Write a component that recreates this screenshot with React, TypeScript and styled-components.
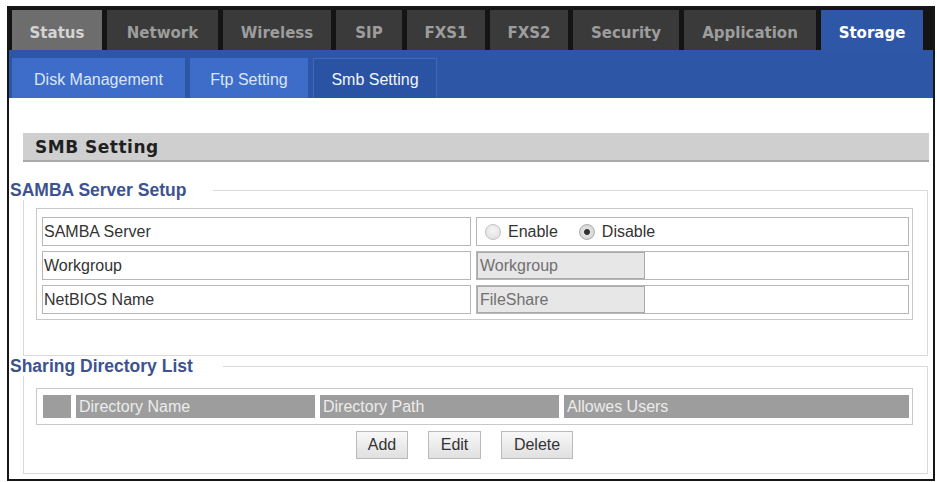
import React, { useState } from 'react';
import styled, { createGlobalStyle } from 'styled-components';

const GlobalStyle = createGlobalStyle`
    html, body {
        margin: 0;
        padding: 0;
        background: #ffffff;
    }
    #root {
        padding: 6px 0 0 7px;
    }
`;

const Frame = styled.div`
    box-sizing: border-box;
    width: 928px;
    height: 475px;
    border: 2px solid #161616;
    display: flex;
    flex-direction: column;
    background: #ffffff;
`;

const TabBar = styled.div`
    height: 42px;
    box-sizing: border-box;
    padding: 2px 0 0 3px;
    background: #141414;
    display: flex;
    gap: 5px;
`;

const Tab = styled.div<{ $w: number; $state: 'first' | 'normal' | 'active' }>`
    width: ${p => p.$w}px;
    height: 40px;
    box-sizing: border-box;
    padding-top: 6px;
    display: flex;
    align-items: center;
    justify-content: center;
    font-family: 'DejaVu Sans', Verdana, sans-serif;
    font-weight: bold;
    font-size: 15px;
    background: ${p => (p.$state === 'active' ? '#2f57a8' : p.$state === 'first' ? '#6d6d6d' : '#3a3a3a')};
    color: ${p => (p.$state === 'active' ? '#ffffff' : p.$state === 'first' ? '#d4d4d4' : '#9d9d9d')};
`;

const SubBar = styled.div`
    height: 48px;
    box-sizing: border-box;
    padding: 8px 0 0 3px;
    background: #2e56a7;
    display: flex;
    gap: 5px;
`;

const SubTab = styled.div<{ $w: number; $active?: boolean }>`
    width: ${p => p.$w}px;
    height: 40px;
    box-sizing: border-box;
    padding-top: 2px;
    display: flex;
    align-items: center;
    justify-content: center;
    font-family: 'Liberation Sans', Arial, sans-serif;
    font-size: 16px;
    background: ${p => (p.$active ? '#2b53a3' : '#3d6dc8')};
    border: 1px solid ${p => (p.$active ? '#4169b9' : '#3d6dc8')};
    border-bottom: none;
    color: ${p => (p.$active ? '#f2f5fb' : '#dbe5f7')};
`;

const Content = styled.div`
    flex: 1;
    padding-top: 35px;
    font-family: 'Liberation Sans', Arial, sans-serif;
    font-size: 16px;
    color: #333333;
`;

const PageHeader = styled.div`
    height: 29px;
    box-sizing: border-box;
    margin: 0 4px 0 14px;
    padding-left: 12px;
    display: flex;
    align-items: center;
    background: #cfcfcf;
    border-bottom: 2px solid #a9a9a9;
    font-family: 'DejaVu Sans', Verdana, sans-serif;
    font-weight: bold;
    font-size: 17px;
    letter-spacing: 0.5px;
    color: #1f1f1f;
`;

const LegendRow = styled.div<{ $top?: number; $rule: number }>`
    display: flex;
    height: 20px;
    margin: ${p => p.$top ?? 0}px 5px 0 1px;

    span {
        font-weight: bold;
        font-size: 17.5px;
        line-height: 20px;
        color: #3d5390;
        white-space: nowrap;
    }

    i {
        flex: 1;
        margin: 10px 0 0 ${p => p.$rule}px;
        border-top: 1px solid #d9d9d9;
        border-right: 1px solid #d9d9d9;
    }
`;

const FieldBox = styled.div<{ $pt: number; $pb: number }>`
    margin: 0 5px 0 14px;
    padding: ${p => p.$pt}px 14px ${p => p.$pb}px 12px;
    border: 1px solid #d9d9d9;
    border-top: none;
`;

const FormTable = styled.div`
    border: 1px solid #c9c9c9;
    padding: 8px 3px 5px 5px;
    display: grid;
    grid-template-columns: 429px 1fr;
    grid-auto-rows: 29px;
    gap: 5px;
`;

const Cell = styled.div`
    box-sizing: border-box;
    border: 1px solid #b7b7b7;
    display: flex;
    align-items: center;
    padding-left: 1px;
    color: #333333;
`;

const ValueCell = styled(Cell)`
    padding-left: 0;
`;

const RadioGroup = styled.label<{ $first?: boolean }>`
    display: flex;
    align-items: center;
    gap: 7px;
    margin-left: ${p => (p.$first ? 8 : 21)}px;
    color: #333333;
`;

const Radio = styled.input.attrs({ type: 'radio' })`
    appearance: none;
    margin: 0;
    width: 16px;
    height: 16px;
    border-radius: 50%;
    border: 1px solid #c2c2c2;
    background: radial-gradient(circle at 50% 40%, #f6f6f6 0%, #dcdcdc 100%);

    &:checked {
        background: radial-gradient(circle, #333333 0 2.5px, #e2e2e2 3.5px, #cdcdcd 100%);
        border-color: #adadad;
    }
`;

const TextInput = styled.input`
    box-sizing: border-box;
    width: 168px;
    height: 100%;
    margin: 0;
    padding: 0 0 0 2px;
    border: 1px solid #a9a9a9;
    background: #e7e7e7;
    font-family: 'Liberation Sans', Arial, sans-serif;
    font-size: 16px;
    color: #707070;
`;

const ListTable = styled.div`
    border: 1px solid #c9c9c9;
    padding: 6px 3px 6px 6px;
    display: grid;
    grid-template-columns: 28px 239px 239px 1fr;
    height: 23px;
    gap: 5px;
`;

const HeadCell = styled.div`
    background: #9d9d9d;
    color: #ececec;
    display: flex;
    align-items: center;
    padding-left: 3px;
    white-space: nowrap;
`;

const ButtonRow = styled.div`
    margin-top: 6px;
    padding-right: 20px;
    display: flex;
    justify-content: center;
    gap: 20px;
`;

const Button = styled.button<{ $w: number }>`
    width: ${p => p.$w}px;
    height: 28px;
    padding: 0;
    border: 1px solid #bababa;
    background: linear-gradient(#f8f8f8, #e0e0e0);
    font-family: 'Liberation Sans', Arial, sans-serif;
    font-size: 16px;
    color: #333333;
`;

const tabs: { label: string; w: number }[] = [
    { label: 'Status', w: 90 },
    { label: 'Network', w: 111 },
    { label: 'Wireless', w: 108 },
    { label: 'SIP', w: 66 },
    { label: 'FXS1', w: 78 },
    { label: 'FXS2', w: 78 },
    { label: 'Security', w: 106 },
    { label: 'Application', w: 132 },
    { label: 'Storage', w: 102 },
];

const subTabs = [
    { label: 'Disk Management', w: 173 },
    { label: 'Ftp Setting', w: 118 },
    { label: 'Smb Setting', w: 124 },
];

export default function App() {
    const [samba, setSamba] = useState<'enable' | 'disable'>('disable');

    return (
        <>
            <GlobalStyle />
            <Frame>
                <TabBar>
                    {tabs.map((t, i) => (
                        <Tab
                            key={t.label}
                            $w={t.w}
                            $state={t.label === 'Storage' ? 'active' : i === 0 ? 'first' : 'normal'}
                        >
                            {t.label}
                        </Tab>
                    ))}
                </TabBar>
                <SubBar>
                    {subTabs.map(t => (
                        <SubTab key={t.label} $w={t.w} $active={t.label === 'Smb Setting'}>
                            {t.label}
                        </SubTab>
                    ))}
                </SubBar>

                <Content>
                    <PageHeader>SMB Setting</PageHeader>

                    <LegendRow $top={18} $rule={27}>
                        <span>SAMBA Server Setup</span>
                        <i />
                    </LegendRow>
                    <FieldBox $pt={8} $pb={35}>
                        <FormTable>
                            <Cell>SAMBA Server</Cell>
                            <ValueCell>
                                <RadioGroup $first>
                                    <Radio
                                        name="samba"
                                        checked={samba === 'enable'}
                                        onChange={() => setSamba('enable')}
                                    />
                                    Enable
                                </RadioGroup>
                                <RadioGroup>
                                    <Radio
                                        name="samba"
                                        checked={samba === 'disable'}
                                        onChange={() => setSamba('disable')}
                                    />
                                    Disable
                                </RadioGroup>
                            </ValueCell>
                            <Cell>Workgroup</Cell>
                            <ValueCell>
                                <TextInput defaultValue="Workgroup" />
                            </ValueCell>
                            <Cell>NetBIOS Name</Cell>
                            <ValueCell>
                                <TextInput defaultValue="FileShare" />
                            </ValueCell>
                        </FormTable>
                    </FieldBox>

                    <LegendRow $rule={30}>
                        <span>Sharing Directory List</span>
                        <i />
                    </LegendRow>
                    <FieldBox $pt={12} $pb={14}>
                        <ListTable>
                            <HeadCell />
                            <HeadCell>Directory Name</HeadCell>
                            <HeadCell>Directory Path</HeadCell>
                            <HeadCell>Allowes Users</HeadCell>
                        </ListTable>
                        <ButtonRow>
                            <Button $w={52}>Add</Button>
                            <Button $w={53}>Edit</Button>
                            <Button $w={72}>Delete</Button>
                        </ButtonRow>
                    </FieldBox>
                </Content>
            </Frame>
        </>
    );
}
